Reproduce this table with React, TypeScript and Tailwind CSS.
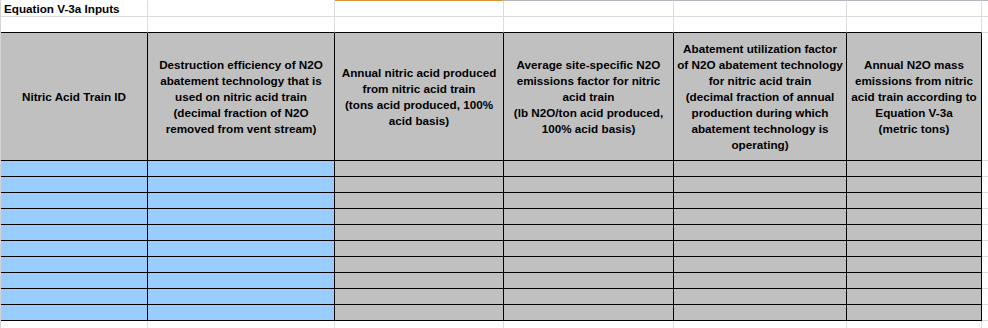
import React from "react";

const COLS = "grid-cols-[147px_187px_169px_170px_173px_135px_1fr]";

const headers: string[][] = [
  ["Nitric Acid Train ID"],
  [
    "Destruction efficiency of N2O",
    "abatement technology that is",
    "used on nitric acid train",
    "(decimal fraction of N2O",
    "removed from vent stream)",
  ],
  [
    "Annual nitric acid produced",
    "from nitric acid train",
    "(tons acid produced, 100%",
    "acid basis)",
  ],
  [
    "Average site-specific N2O",
    "emissions factor for nitric",
    "acid train",
    "(lb N2O/ton acid produced,",
    "100% acid basis)",
  ],
  [
    "Abatement utilization factor",
    "of N2O abatement technology",
    "for nitric acid train",
    "(decimal fraction of annual",
    "production during which",
    "abatement technology is",
    "operating)",
  ],
  [
    "Annual N2O mass",
    "emissions from nitric",
    "acid train according to",
    "Equation V-3a",
    "(metric tons)",
  ],
];

const topLine = [
  "border-t-white",
  "border-t-white",
  "border-t-[#d5933a]",
  "border-t-[#b3b7bd]",
  "border-t-[#b3b7bd]",
  "border-t-[#b3b7bd]",
  "border-t-[#b3b7bd]",
];

export default function App() {
  const idx = [0, 1, 2, 3, 4, 5, 6];
  const rows = Array.from({ length: 10 }, (_, i) => i);
  return (
    <div
      className="w-[988px] h-[328px] overflow-hidden bg-white text-black"
      style={{ fontFamily: '"Liberation Sans", Arial, sans-serif' }}
    >
      <div className={`grid ${COLS} border-l border-l-[#d4d4d4]`}>
        {/* Row 1: title */}
        {idx.map((c) => (
          <div
            key={`r1-${c}`}
            className={`h-[17px] border-t ${topLine[c]} border-b border-b-[#dadcdd] ${
              c < 6 ? "border-r border-r-[#dadcdd]" : ""
            } relative`}
          >
            {c === 0 && (
              <span className="absolute left-[3px] top-[1px] whitespace-nowrap text-[11.7px] leading-[14px] font-bold">
                Equation V-3a Inputs
              </span>
            )}
          </div>
        ))}
        {/* Row 2: blank */}
        {idx.map((c) => (
          <div
            key={`r2-${c}`}
            className={`h-[16px] border-b ${
              c < 6 ? "border-b-black border-r border-r-[#dadcdd]" : "border-b-[#dadcdd]"
            }`}
          />
        ))}
        {/* Header row */}
        {idx.map((c) =>
          c < 6 ? (
            <div
              key={`h-${c}`}
              className="h-[128px] bg-[#c0c0c0] border-r border-b border-black flex flex-col items-center justify-center text-[11.7px] leading-[16px] font-bold text-center"
            >
              {headers[c].map((l, j) => (
                <div key={j} className="whitespace-nowrap">
                  {l}
                </div>
              ))}
            </div>
          ) : (
            <div key={`h-${c}`} className="h-[128px] border-b border-b-[#dadcdd]" />
          )
        )}
        {/* Data rows */}
        {rows.map((r) =>
          idx.map((c) =>
            c < 6 ? (
              <div
                key={`d-${r}-${c}`}
                className={`h-[16px] border-r border-b border-black ${
                  c < 2 ? "bg-[#99ccff]" : "bg-[#c0c0c0]"
                }`}
              />
            ) : (
              <div key={`d-${r}-${c}`} className="h-[16px] border-b border-b-[#dadcdd]" />
            )
          )
        )}
        {/* Trailing partial row */}
        {idx.map((c) => (
          <div
            key={`t-${c}`}
            className={`h-[16px] ${c < 6 ? "border-r border-r-[#dadcdd]" : ""}`}
          />
        ))}
      </div>
    </div>
  );
}
